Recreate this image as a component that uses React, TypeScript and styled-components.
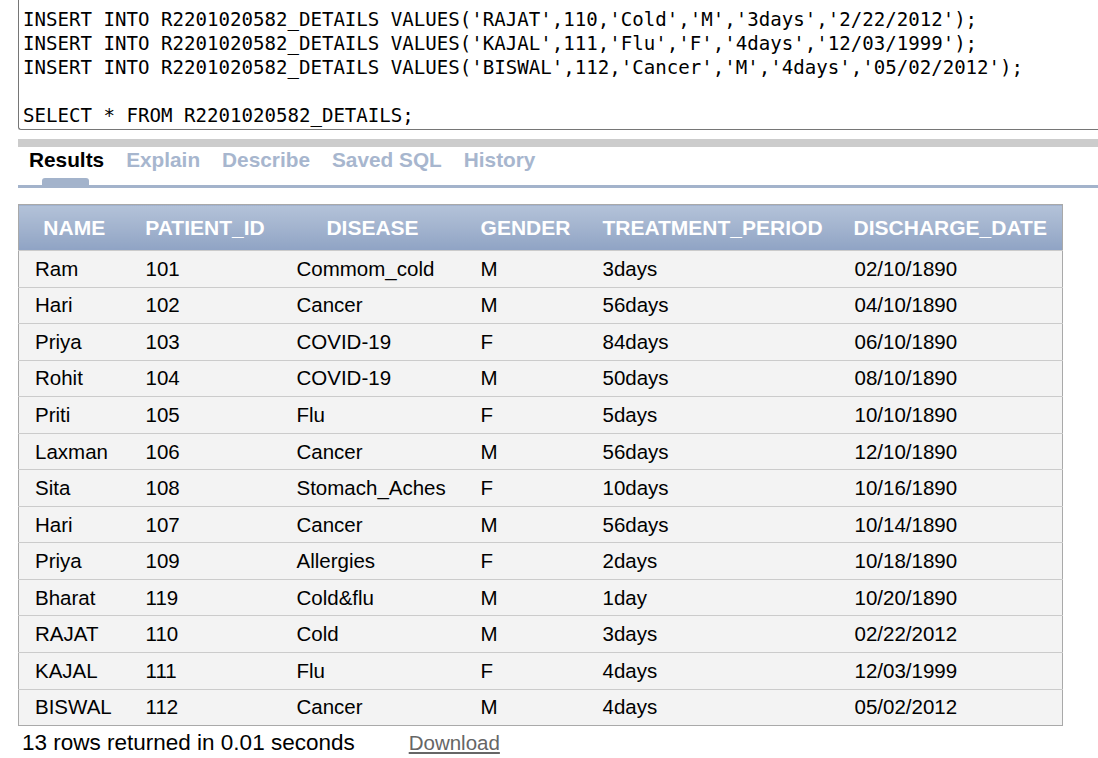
import React from "react";
import styled, { createGlobalStyle } from "styled-components";

const Global = createGlobalStyle`
  html, body { margin: 0; padding: 0; background: #fff; overflow: hidden; }
  body { font-family: "Liberation Sans", Arial, sans-serif; color: #000; }
`;

const Page = styled.div`
  width: 1098px;
  height: 758px;
  padding-left: 18px;
  box-sizing: border-box;
  overflow: hidden;
`;

const CodeBox = styled.pre`
  margin: 0;
  padding: 8px 0 1px 4px;
  border-left: 1px solid #767676;
  border-bottom: 1px solid #767676;
  border-bottom-left-radius: 3px;
  font-family: "DejaVu Sans Mono", "Liberation Mono", monospace;
  font-size: 19.1px;
  line-height: 24px;
  color: #000;
  white-space: pre;
`;

const GrayBar = styled.div`
  margin-top: 9px;
  height: 8px;
  background: #cccccc;
`;

const TabBar = styled.div`
  display: flex;
  height: 38px;
  border-bottom: 3px solid #a3b3cb;
`;

const Tab = styled.div<{ $active?: boolean }>`
  position: relative;
  padding: 0 11px;
  font-size: 20.8px;
  font-weight: bold;
  line-height: 25px;
  color: ${(p) => (p.$active ? "#000" : "#a7b6ce")};
  &::after {
    content: "";
    display: ${(p) => (p.$active ? "block" : "none")};
    position: absolute;
    left: 24px;
    width: 47px;
    bottom: 0;
    height: 7px;
    background: #a3b3cb;
    border-radius: 3px 3px 0 0;
  }
`;

const Table = styled.table`
  margin-top: 16px;
  border-collapse: collapse;
  border: 1px solid #a9a9a9;
  table-layout: fixed;
  width: 1044px;
`;

const Th = styled.th`
  height: 45px;
  padding: 0;
  font-size: 21px;
  font-weight: bold;
  color: #fff;
  text-align: center;
  background: linear-gradient(to bottom, #b3c2d9 0%, #a2b3ce 50%, #8fa3c4 100%);
  white-space: nowrap;
`;

const Tr = styled.tr`
  height: 36.55px;
  background: #f3f3f3;
  border-top: 1px solid #cbcbcb;
`;

const Td = styled.td`
  padding: 0 0 0 16px;
  font-size: 20.5px;
  color: #000;
  white-space: nowrap;
`;

const Footer = styled.div`
  display: flex;
  align-items: baseline;
  padding-left: 4px;
  margin-top: 4px;
`;

const Summary = styled.span`
  font-size: 22.5px;
  line-height: 26px;
`;

const DownloadLink = styled.a`
  margin-left: 54px;
  font-size: 20.5px;
  color: #666;
  text-decoration: underline;
`;

const columns = [
  { name: "NAME", w: 111 },
  { name: "PATIENT_ID", w: 151 },
  { name: "DISEASE", w: 184 },
  { name: "GENDER", w: 122 },
  { name: "TREATMENT_PERIOD", w: 252 },
  { name: "DISCHARGE_DATE", w: 224 },
];

const rows = [
  ["Ram", "101", "Commom_cold", "M", "3days", "02/10/1890"],
  ["Hari", "102", "Cancer", "M", "56days", "04/10/1890"],
  ["Priya", "103", "COVID-19", "F", "84days", "06/10/1890"],
  ["Rohit", "104", "COVID-19", "M", "50days", "08/10/1890"],
  ["Priti", "105", "Flu", "F", "5days", "10/10/1890"],
  ["Laxman", "106", "Cancer", "M", "56days", "12/10/1890"],
  ["Sita", "108", "Stomach_Aches", "F", "10days", "10/16/1890"],
  ["Hari", "107", "Cancer", "M", "56days", "10/14/1890"],
  ["Priya", "109", "Allergies", "F", "2days", "10/18/1890"],
  ["Bharat", "119", "Cold&flu", "M", "1day", "10/20/1890"],
  ["RAJAT", "110", "Cold", "M", "3days", "02/22/2012"],
  ["KAJAL", "111", "Flu", "F", "4days", "12/03/1999"],
  ["BISWAL", "112", "Cancer", "M", "4days", "05/02/2012"],
];

const code = `INSERT INTO R2201020582_DETAILS VALUES('RAJAT',110,'Cold','M','3days','2/22/2012');
INSERT INTO R2201020582_DETAILS VALUES('KAJAL',111,'Flu','F','4days','12/03/1999');
INSERT INTO R2201020582_DETAILS VALUES('BISWAL',112,'Cancer','M','4days','05/02/2012');

SELECT * FROM R2201020582_DETAILS;`;

export default function App() {
  return (
    <Page>
      <Global />
      <CodeBox>{code}</CodeBox>
      <GrayBar />
      <TabBar>
        <Tab $active>Results</Tab>
        <Tab>Explain</Tab>
        <Tab>Describe</Tab>
        <Tab>Saved SQL</Tab>
        <Tab>History</Tab>
      </TabBar>
      <Table>
        <colgroup>
          {columns.map((c) => (
            <col key={c.name} style={{ width: c.w }} />
          ))}
        </colgroup>
        <thead>
          <tr>
            {columns.map((c) => (
              <Th key={c.name}>{c.name}</Th>
            ))}
          </tr>
        </thead>
        <tbody>
          {rows.map((r, i) => (
            <Tr key={i}>
              {r.map((v, j) => (
                <Td key={j}>{v}</Td>
              ))}
            </Tr>
          ))}
        </tbody>
      </Table>
      <Footer>
        <Summary>13 rows returned in 0.01 seconds</Summary>
        <DownloadLink href="#">Download</DownloadLink>
      </Footer>
    </Page>
  );
}
